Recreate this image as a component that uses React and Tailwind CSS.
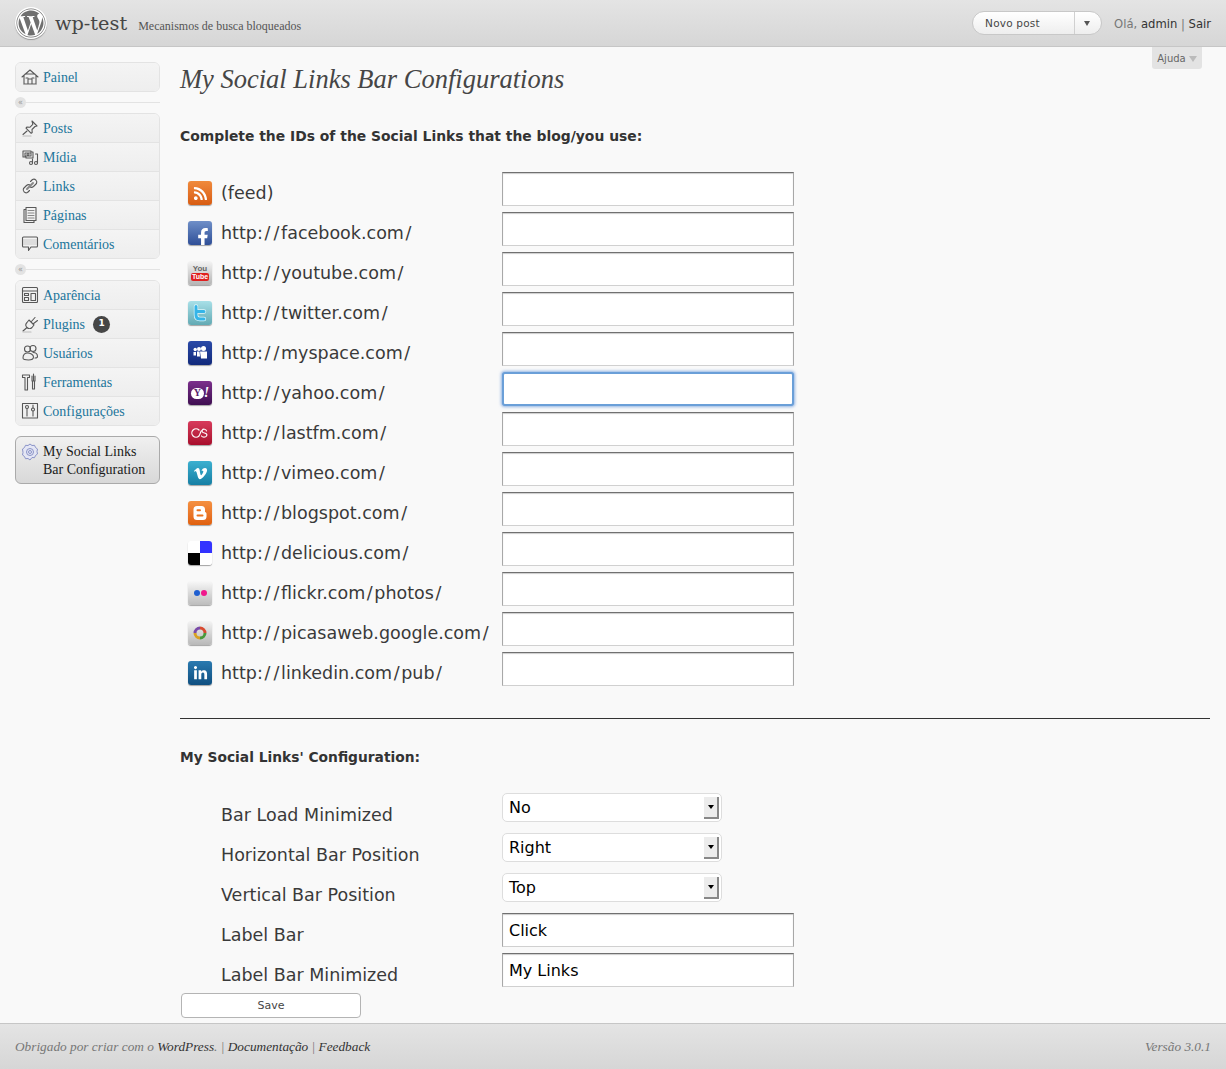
import React from "react";
import { FaWordpress, FaRss, FaFacebookF, FaVimeoV, FaLinkedinIn } from "react-icons/fa";

const sans = "font-['DejaVu_Sans',sans-serif]";
const serif = "font-['Liberation_Serif',serif]";

const ic = { width: 18, height: 18, viewBox: "0 0 18 18", fill: "none", stroke: "#585858", strokeWidth: 1.1, strokeLinejoin: "round", strokeLinecap: "round" };

const MenuIcons = {
  home: <svg {...ic}><path d="M1 9 9 2l8 7M3 8v8h12V8M7 16v-5h4v5M5 10h2M11 10h2M4 6h10" /><path d="M3 16.500h12" stroke="#aaa" /></svg>,
  pin: <svg {...ic}><path d="M11 2l5 5-2 .5-3 3 .2 3-1 .8-5.200-5.200.8-1 3 .2 3-3zM6 12l-4 3.500" /><path d="M2 17h8" stroke="#bbb" /></svg>,
  media: <svg {...ic}><path d="M2 3h8v1h2v6H5V9H2zM4 5h6v3H4z" /><circle cx="7" cy="6.500" r="1" /><circle cx="10" cy="15" r="1.500" /><circle cx="15" cy="15" r="1.500" /><path d="M11.500 15V11M16.500 15V6h-2" /></svg>,
  link: <svg {...ic}><path d="M9.500 4.500l2-2a3 3 0 0 1 4 4l-3 3a3 3 0 0 1-4 0" /><path d="M8.500 13.500l-2 2a3 3 0 0 1-4-4l3-3a3 3 0 0 1 4 0" /><path d="M6 12l6-6" strokeWidth="2" stroke="#888" /></svg>,
  page: <svg {...ic}><path d="M5 1.500h10v13H5zM5 3.500H3v13h10v-2" /><path d="M7 4.500h6M7 7h6M7 9.500h6M7 12h6" stroke="#888" /></svg>,
  comment: <svg {...ic}><path d="M2 4h14v6H2z" fill="#ddd" stroke="none" /><path d="M2.500 2h13a1 1 0 0 1 1 1v8a1 1 0 0 1-1 1H10l-2.500 3.500V12h-5a1 1 0 0 1-1-1V3a1 1 0 0 1 1-1z" /></svg>,
  look: <svg {...ic}><rect x="1.500" y="1.500" width="15" height="15" rx="1" /><path d="M1.500 5h15M3.500 7.500h4v2h-4zM3.500 11.500h4v3h-4zM10 7.500h4.500v7H10z" /></svg>,
  plug: <svg {...ic}><path d="M8 5l5 5-2 2.500a3.500 3.500 0 0 1-5-5zM10 7l4-4.500M12 9l4.500-3.500M6 12.500l-4 3.500" /><path d="M2 17h8" stroke="#bbb" /></svg>,
  users: <svg {...ic}><circle cx="6.500" cy="5" r="3" /><circle cx="12" cy="4.500" r="3" /><path d="M2 14c0-3.500 2-5 4.500-5s6 1.500 6 4-1.500 3-5 3-5.500-.5-5.500-2zM12 8.500c2.500 0 4.500 1.500 4.500 4 0 1-1 1.500-2.500 1.500" /></svg>,
  tools: <svg {...ic}><path d="M1.500 2h7v2.500h-2V17H4V4.500H1.500zM11 3v5h3V3M12.500 1v7M11.500 8v8h2V8" /></svg>,
  settings: <svg {...ic}><rect x="1.500" y="1.500" width="15" height="14.500" /><circle cx="6" cy="5" r="1.500" /><path d="M6 6.500V14M12 3v3" /><circle cx="12" cy="7.500" r="1.500" /><path d="M12 9v5" /></svg>,
  gear: <svg width="18" height="18" viewBox="0 0 18 18" fill="none" stroke="#8a93c8" strokeWidth="1"><path d="M9 1l2 1.500 2.500-.2 1 2.200 2 1.500-.5 2.500.5 2.500-2 1.500-1 2.200-2.500-.2L9 17l-2-1.500-2.500.2-1-2.200-2-1.500.5-2.500L1.500 6l2-1.500 1-2.200 2.500.2z" fill="#e4e6f4" /><circle cx="9" cy="9" r="3.500" /><circle cx="9" cy="9" r="1.500" /></svg>,
};

const Row = ({ icon, label, badge, last }) => (
  <div className={`flex items-center pl-[5px] bg-linear-to-b from-[#f4f4f4] to-[#eeeeee] ${last ? "h-[28px]" : "h-[29px] border-b border-b-[#e3e3e3]"}`}>
    <span className="flex w-[22px] shrink-0">{MenuIcons[icon]}</span>
    <span className={`${serif} text-[14px] text-[#21759b]`}>{label}</span>
    {badge && (
      <span className={`${sans} ml-[8px] flex h-[17px] w-[17px] items-center justify-center rounded-full bg-[#464646] text-[9px] font-bold text-white`}>{badge}</span>
    )}
  </div>
);

const Group = ({ items }) => (
  <div className="overflow-hidden rounded-[6px] border border-[#e3e3e3]">
    {items.map((it, i) => <Row key={it.label} {...it} last={i === items.length - 1} />)}
  </div>
);

const Sep = () => (
  <div className="relative my-[5px] flex h-[11px] items-center">
    <div className="h-px w-full bg-[#e3e3e3]" />
    <span className={`${sans} absolute left-0 flex h-[11px] w-[11px] items-center justify-center rounded-full bg-[#e3e3e3] text-[8px] leading-none text-[#999]`}>«</span>
  </div>
);

const Tile = ({ from, to, children, className = "" }) => (
  <div className={`flex h-[24px] w-[24px] shrink-0 items-center justify-center overflow-hidden rounded-[3px] bg-linear-to-b shadow-[0_1px_1px_rgba(0,0,0,0.35)] ${from} ${to} ${className}`}>
    {children}
  </div>
);

const social = [
  ["(feed)", <Tile from="from-[#f08a3c]" to="to-[#d85c10]"><FaRss size={15} color="#fff" /></Tile>],
  ["http://facebook.com/", <Tile from="from-[#6f8fc8]" to="to-[#2f4f97]" className="items-end"><FaFacebookF size={18} color="#fff" className="ml-[5px] translate-y-[1px]" /></Tile>],
  ["http://youtube.com/", <Tile from="from-[#f5f5f5]" to="to-[#b4b4b4]" className="flex-col"><span className="font-['Liberation_Sans',sans-serif] text-[8px] font-bold leading-[8px] text-[#666]">You</span><span className="rounded-[2px] bg-[#e02020] px-[1px] font-['Liberation_Sans',sans-serif] text-[7px] font-bold leading-[8px] text-white">Tube</span></Tile>],
  ["http://twitter.com/", <Tile from="from-[#a8e0e8]" to="to-[#62aab4]"><svg width="16" height="18" viewBox="0 0 16 18" fill="none" strokeLinecap="round" strokeLinejoin="round"><path d="M4 2.500V11c0 2.500 1.500 4 4 4h4M4 7.500h8" stroke="#dff6fa" strokeWidth="4.400" /><path d="M4 2.500V11c0 2.500 1.500 4 4 4h4M4 7.500h8" stroke="#35b5e8" strokeWidth="3" /></svg></Tile>],
  ["http://myspace.com/", <Tile from="from-[#2a4aa8]" to="to-[#122a7c]"><svg width="16" height="15" viewBox="0 0 16 15" fill="#fff"><circle cx="11.500" cy="2.500" r="2.500" /><circle cx="7" cy="3" r="2" /><circle cx="3.200" cy="3.500" r="1.700" /><path d="M8 5.500h7v7H9zM5 5.500h2.500l.5 5H5zM1.500 6H4v3.500H1.500z" /></svg></Tile>],
  ["http://yahoo.com/", <Tile from="from-[#7c2f8c]" to="to-[#3f0f52]"><span className="flex h-[11px] w-[13px] items-center justify-center rounded-full bg-white font-['Liberation_Serif',serif] text-[10px] font-bold leading-none text-[#5a1f6e]">Y</span><span className={`${serif} text-[14px] font-bold italic leading-none text-white`}>!</span></Tile>],
  ["http://lastfm.com/", <Tile from="from-[#d83a5c]" to="to-[#a80c2c]"><svg width="18" height="16" viewBox="0 0 18 16" fill="none" stroke="#fff" strokeWidth="1.200" strokeLinecap="round"><path d="M8 5A4.200 4.200 0 1 0 8 11C9 9.500 9.500 7 10.300 5.800" /><path d="M15.500 5.800C15 4 12 3.600 11.200 5.200 10.500 7 12 7.600 13.500 8 15.500 8.500 16.500 9.500 15.500 11 14.500 12.500 11.500 12.500 10.500 11" /></svg></Tile>],
  ["http://vimeo.com/", <Tile from="from-[#3cb0d0]" to="to-[#157fa4]"><FaVimeoV size={15} color="#fff" /></Tile>],
  ["http://blogspot.com/", <Tile from="from-[#f59040]" to="to-[#e0600c]"><svg width="16" height="16" viewBox="0 0 16 16"><path d="M5 1h4.500A3.500 3.500 0 0 1 13 4.500V7c1 .3 1.500 1 1.500 2v2.500A3.500 3.500 0 0 1 11 15H5a3.500 3.500 0 0 1-3.500-3.500v-7A3.500 3.500 0 0 1 5 1z" fill="#fff" /><rect x="4.500" y="4.300" width="4.500" height="2" rx="1" fill="#ec7420" /><rect x="4.500" y="9.500" width="7" height="2" rx="1" fill="#ec7420" /></svg></Tile>],
  ["http://delicious.com/", <div className="grid h-[24px] w-[24px] shrink-0 grid-cols-2 grid-rows-2 overflow-hidden rounded-[3px] shadow-[0_1px_1px_rgba(0,0,0,0.35)]"><div className="bg-white" /><div className="bg-[#3333ff]" /><div className="bg-black" /><div className="bg-white" /></div>],
  ["http://flickr.com/photos/", <Tile from="from-[#f8f8f8]" to="to-[#bcbcbc]"><span className="h-[6px] w-[6px] rounded-full bg-[#1f5fd0]" /><span className="ml-[1px] h-[6px] w-[6px] rounded-full bg-[#f0188c]" /></Tile>],
  ["http://picasaweb.google.com/", <Tile from="from-[#f4f4f4]" to="to-[#b8b8b8]"><svg width="16" height="16" viewBox="0 0 16 16" fill="none" strokeWidth="3"><path d="M8 3A5 5 0 0 1 13 8" stroke="#d84a30" /><path d="M13 8A5 5 0 0 1 8 13" stroke="#4a9a3c" /><path d="M8 13A5 5 0 0 1 3 8" stroke="#d8a020" /><path d="M3 8A5 5 0 0 1 8 3" stroke="#7a4aa8" /></svg></Tile>],
  ["http://linkedin.com/pub/", <Tile from="from-[#2a7ab0]" to="to-[#0f4f80]"><FaLinkedinIn size={15} color="#fff" /></Tile>],
];

const inputCls = `${sans} block h-[34px] w-[292px] border border-x-[#a8a8a8] border-t-[#707070] border-b-[#d0d0d0] bg-white px-[6px] text-[16px] text-black shadow-[inset_0_1px_1px_rgba(0,0,0,0.2)] outline-none`;
const focusCls = "block h-[34px] w-[292px] rounded-[3px] border-2 border-[#6a9fd8] bg-white shadow-[0_0_3px_1px_rgba(100,150,220,0.7)] outline-none";
const labelCls = `${sans} text-[17.500px] leading-[24px] text-[#3a3a3a]`;

const Spaced = ({ text }) => text.split(/(\/)/).map((part, i) =>
  part === "/" ? <span key={i} className="px-[1.600px]">/</span> : part
);

const SocialRow = ({ label, icon, focus }) => (
  <div className="flex h-[40px] items-start pt-[2px]">
    <div className="flex w-[322px] shrink-0 items-center pl-[8px] pt-[9px]">
      {icon}
      <span className={`${labelCls} ml-[9px] whitespace-nowrap`}><Spaced text={label} /></span>
    </div>
    <input className={focus ? focusCls : inputCls} />
  </div>
);

const Select = ({ value }) => (
  <div className={`${sans} relative flex h-[29px] w-[220px] items-center rounded-[5px] border border-[#dddddd] bg-white pl-[6px] text-[16px] text-black`}>
    {value}
    <span className="absolute right-[2px] top-[3px] flex h-[22px] w-[15px] items-center justify-center border-b-2 border-r-2 border-b-[#888] border-r-[#888] bg-[#ececec]">
      <span className="h-0 w-0 border-x-[3px] border-t-[4px] border-x-transparent border-t-black" />
    </span>
  </div>
);

const ConfigRow = ({ label, children }) => (
  <div className="flex h-[40px] items-start">
    <div className={`${labelCls} w-[322px] shrink-0 pl-[41px] pt-[10px]`}>{label}</div>
    {children}
  </div>
);

export default function App() {
  return (
    <div className="relative flex min-h-[1069px] flex-col bg-[#f9f9f9]">
      <header className="flex h-[47px] shrink-0 items-center border-b border-b-[#c6c6c6] bg-linear-to-b from-[#e4e4e4] to-[#d6d6d6] pl-[15px] pr-[15px]">
        <span className="flex h-[32px] w-[32px] items-center justify-center rounded-full bg-white shadow-[0_1px_1px_rgba(0,0,0,0.3)]">
          <FaWordpress size={30} color="#6f6f6f" />
        </span>
        <span className="ml-[8px] mt-[2px] font-['DejaVu_Serif',serif] text-[19.300px] leading-none text-[#464646]">wp-test</span>
        <span className={`${serif} ml-[11px] mt-[5px] text-[12px] text-[#555]`}>Mecanismos de busca bloqueados</span>
        <div className={`${sans} ml-auto flex h-[24px] w-[130px] items-center rounded-full border border-[#c8c8c8] bg-linear-to-b from-[#ffffff] to-[#eeeeee] text-[10.500px] tracking-[0.2px] text-[#464646]`}>
          <span className="mt-[1px] flex-1 pl-[12px]">Novo post</span>
          <span className="flex h-full w-[27px] items-center justify-center border-l border-l-[#d0d0d0] pr-[3px]">
            <span className="h-0 w-0 border-x-[3.500px] border-t-[5px] border-x-transparent border-t-[#555]" />
          </span>
        </div>
        <div className={`${sans} ml-[12px] mt-[3px] whitespace-nowrap text-[11.600px] text-[#777]`}>
          Olá, <span className="text-[#333]">admin</span> | <span className="text-[#333]">Sair</span>
        </div>
      </header>
      <div className={`${sans} absolute right-[24px] top-[47px] flex h-[22px] w-[50px] items-center justify-center gap-[3px] rounded-b-[3px] bg-[#e3e3e3] text-[10px] text-[#666]`}>
        Ajuda <span className="mt-[1px] h-0 w-0 border-x-[4px] border-t-[6px] border-x-transparent border-t-[#bbb]" />
      </div>

      <div className="flex flex-1 pl-[15px] pr-[16px]">
        <aside className="w-[145px] shrink-0 pt-[15px]">
          <Group items={[{ icon: "home", label: "Painel" }]} />
          <Sep />
          <Group items={[
            { icon: "pin", label: "Posts" }, { icon: "media", label: "Mídia" }, { icon: "link", label: "Links" },
            { icon: "page", label: "Páginas" }, { icon: "comment", label: "Comentários" },
          ]} />
          <Sep />
          <Group items={[
            { icon: "look", label: "Aparência" }, { icon: "plug", label: "Plugins", badge: "1" }, { icon: "users", label: "Usuários" },
            { icon: "tools", label: "Ferramentas" }, { icon: "settings", label: "Configurações" },
          ]} />
          <div className="mt-[10px] flex h-[48px] rounded-[6px] border border-[#aaaaaa] bg-linear-to-b from-[#f0f0f0] to-[#d8d8d8] pl-[5px] pt-[6px]">
            <span className="w-[22px] shrink-0">{MenuIcons.gear}</span>
            <span className={`${serif} text-[14px] leading-[18px] text-[#1a1a1a]`}>My Social Links<br />Bar Configuration</span>
          </div>
        </aside>

        <main className="min-w-0 flex-1 pl-[20px]">
          <h2 className={`${serif} mt-[14px] h-[36px] text-[26.500px] italic leading-[36px] text-[#464646]`}>My Social Links Bar Configurations</h2>
          <h3 className={`${sans} mt-[27px] h-[24px] text-[13.900px] font-bold leading-[24px] text-[#333]`}>Complete the IDs of the Social Links that the blog/you use:</h3>
          <div className="mt-[22px]">
            {social.map(([label, icon]) => <SocialRow key={label} label={label} icon={icon} focus={label === "http://yahoo.com/"} />)}
          </div>
          <hr className="mt-[28px] border-t border-t-[#333]" />
          <h3 className={`${sans} mt-[26px] h-[24px] text-[13.800px] font-bold leading-[24px] text-[#333]`}>My Social Links' Configuration:</h3>
          <div className="mt-[24px]">
            <ConfigRow label="Bar Load Minimized"><Select value="No" /></ConfigRow>
            <ConfigRow label="Horizontal Bar Position"><Select value="Right" /></ConfigRow>
            <ConfigRow label="Vertical Bar Position"><Select value="Top" /></ConfigRow>
            <ConfigRow label="Label Bar"><input defaultValue="Click" className={inputCls} /></ConfigRow>
            <ConfigRow label="Label Bar Minimized"><input defaultValue="My Links" className={inputCls} /></ConfigRow>
          </div>
          <button className={`${sans} ml-px block h-[25px] w-[180px] rounded-[4px] border border-[#b4b4b4] bg-white pt-[2px] text-[11px] text-[#464646]`}>Save</button>
        </main>
      </div>

      <footer className={`${serif} mt-[5px] flex h-[46px] shrink-0 items-center justify-between border-t border-t-[#c6c6c6] bg-linear-to-b from-[#e4e4e4] to-[#d6d6d6] px-[15px] text-[13.300px] italic text-[#777]`}>
        <span>Obrigado por criar com o <span className="text-[#333]">WordPress</span>. | <span className="text-[#333]">Documentação</span> | <span className="text-[#333]">Feedback</span></span>
        <span>Versão 3.0.1</span>
      </footer>
    </div>
  );
}
